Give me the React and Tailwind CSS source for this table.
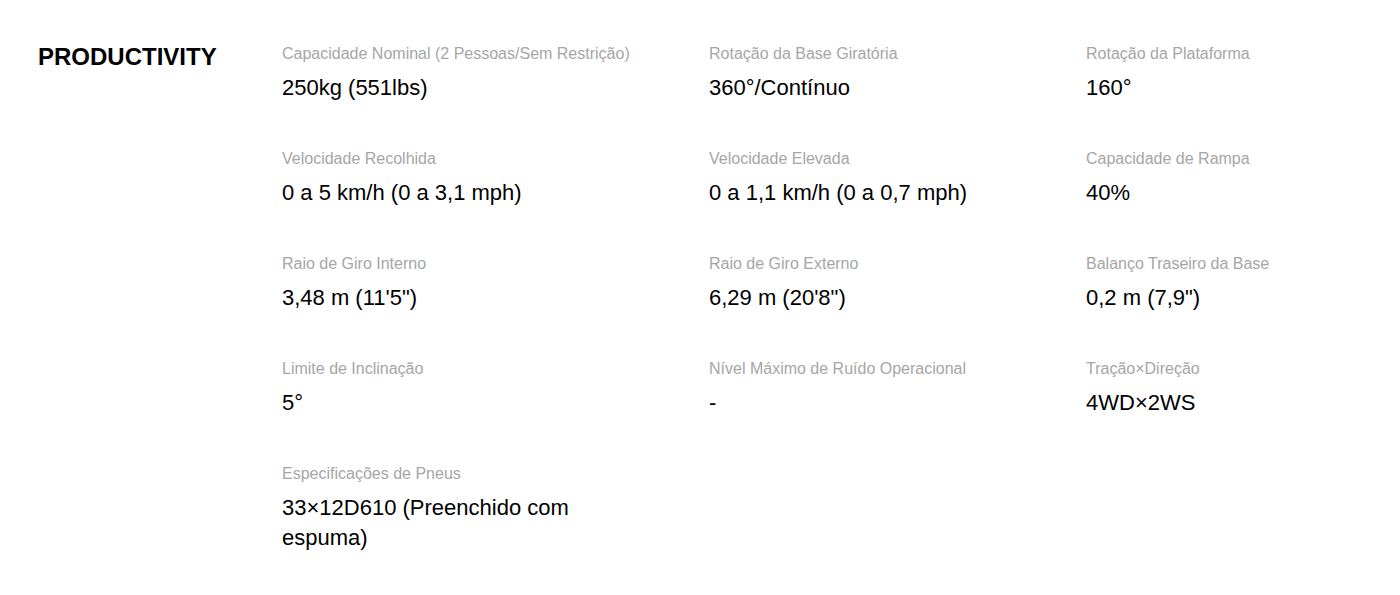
import React from "react";

const specs = [
  ["Capacidade Nominal (2 Pessoas/Sem Restrição)", "250kg (551lbs)"],
  ["Rotação da Base Giratória", "360°/Contínuo"],
  ["Rotação da Plataforma", "160°"],
  ["Velocidade Recolhida", "0 a 5 km/h (0 a 3,1 mph)"],
  ["Velocidade Elevada", "0 a 1,1 km/h (0 a 0,7 mph)"],
  ["Capacidade de Rampa", "40%"],
  ["Raio de Giro Interno", "3,48 m (11'5\")"],
  ["Raio de Giro Externo", "6,29 m (20'8\")"],
  ["Balanço Traseiro da Base", "0,2 m (7,9\")"],
  ["Limite de Inclinação", "5°"],
  ["Nível Máximo de Ruído Operacional", "-"],
  ["Tração×Direção", "4WD×2WS"],
  ["Especificações de Pneus", "33×12D610 (Preenchido com espuma)"],
];

export default function App() {
  return (
    <div
      className="min-h-[595px] bg-white pl-[38px] pt-[43px] pb-10"
      style={{ fontFamily: '"Liberation Sans", Arial, sans-serif' }}
    >
      <div className="flex">
        <h2 className="w-[244px] shrink-0 text-[24px] leading-[28px] font-bold text-black">
          PRODUCTIVITY
        </h2>
        <div className="grid grid-cols-[427px_377px_280px] gap-y-[45px]">
          {specs.map(([label, value]) => (
            <div key={label}>
              <div className="whitespace-nowrap text-[16px] leading-[22px] text-[#a6a6a6]">
                {label}
              </div>
              <div className="mt-2 max-w-[340px] text-[22px] leading-[30px] text-black">
                {value}
              </div>
            </div>
          ))}
        </div>
      </div>
    </div>
  );
}
